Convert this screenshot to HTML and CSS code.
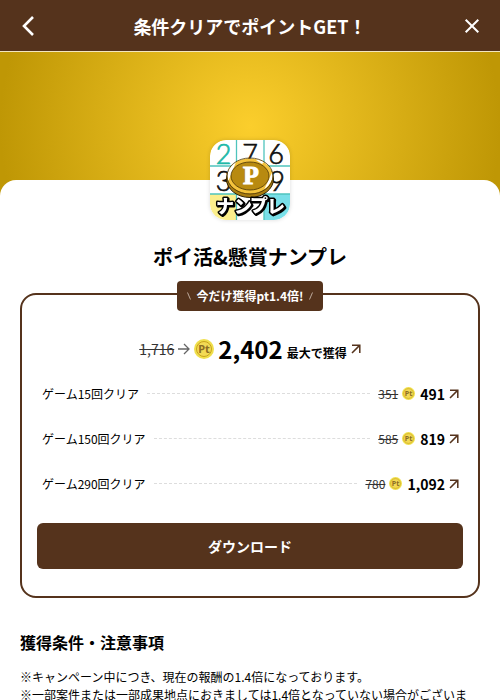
FILE: index.html
```html
<!DOCTYPE html>
<html lang="ja">
<head>
<meta charset="utf-8">
<meta name="viewport" content="width=device-width, initial-scale=1">
<title>条件クリアでポイントGET！</title>
<link rel="stylesheet" href="styles.css">
</head>
<body>
<svg width="0" height="0" class="defs" aria-hidden="true">
  <symbol id="up" viewBox="0 0 10 10">
    <path d="M1 1.2H8.8V9M8.6 1.4L1 9" fill="none" stroke="#55331c" stroke-width="1.5"/>
  </symbol>
</svg>
<header class="bar">
  <button class="bar-btn" aria-label="戻る"><svg width="16" height="24" viewBox="0 0 16 24"><path d="M13 3L4 12L13 21" fill="none" stroke="#fff" stroke-width="2.6"/></svg></button>
  <h1>条件クリアでポイントGET！</h1>
  <button class="bar-btn" aria-label="閉じる"><svg width="16" height="16" viewBox="0 0 16 16"><path d="M1.7 1.7L14.3 14.3M14.3 1.7L1.7 14.3" fill="none" stroke="#fff" stroke-width="2"/></svg></button>
</header>
<div class="hero"></div>
<main class="sheet">
  <svg class="app-icon" viewBox="0 0 80 80" role="img" aria-label="ナンプレ">
    <defs>
      <clipPath id="tile"><rect width="80" height="80" rx="16"/></clipPath>
      <clipPath id="ring"><ellipse cx="40" cy="36" rx="22.500" ry="17.500"/></clipPath>
    </defs>
    <g clip-path="url(#tile)">
      <rect width="80" height="80" fill="#fff"/>
      <rect y="54" width="26" height="26" fill="#fbee8c"/>
      <rect x="54" y="54" width="26" height="26" fill="#78dfe8"/>
      <path d="M26.500 0V80M54 0V80M0 26H80M0 54H80" stroke="#4fc4bd" stroke-width="1.300"/>
      <g class="digits">
        <text x="13.500" y="24" class="teal">2</text>
        <text x="40" y="24">7</text>
        <text x="66" y="24">6</text>
        <text x="13.500" y="51">3</text>
        <text x="67" y="51">9</text>
      </g>
      <ellipse cx="40" cy="39" rx="23.500" ry="18.500" fill="#a87c10" stroke="#2b1f05" stroke-width="1"/>
      <g clip-path="url(#ring)">
        <rect x="14" y="14" width="52" height="46" fill="#f4c33c"/>
        <path d="M14 48L24 54L36 60L20 60ZM14 36L22 22L26 22L18 42ZM50 16L56 20L52 24L46 20Z" fill="#fff"/>
        <path d="M58 46L66 34L64 28L54 50Z" fill="#fff"/>
      </g>
      <ellipse cx="40" cy="36" rx="23" ry="18" fill="none" stroke="#4a3508" stroke-width=".8"/>
      <ellipse cx="40" cy="36" rx="19" ry="14" fill="#b88a10" stroke="#4a3508" stroke-width=".8"/>
      <text x="41" y="44" class="coin-p">P</text>
      <g class="kana">
        <text x="15" y="73">ナ</text>
        <text x="33" y="73">ン</text>
        <text x="49" y="72">プ</text>
        <text x="66" y="73">レ</text>
      </g>
    </g>
  </svg>
  <h2 class="app-name">ポイ活&amp;懸賞ナンプレ</h2>
  <section class="card">
    <p class="badge"><svg width="4" height="8" viewBox="0 0 4 8"><path d="M.5 .5L3.500 7.500" stroke="#d8c8bc" stroke-width=".8"/></svg><span>今だけ獲得pt1.4倍!</span><svg width="4" height="8" viewBox="0 0 4 8"><path d="M3.500 .5L.5 7.500" stroke="#d8c8bc" stroke-width=".8"/></svg></p>
    <p class="total">
      <s>1,716</s>
      <svg class="next" width="12" height="12" viewBox="0 0 12 12"><path d="M0 6H11M6 1L11 6L6 11" fill="none" stroke="#666" stroke-width="1.300"/></svg>
      <svg class="coin-lg" viewBox="0 0 20 20"><circle class="rim" cx="10" cy="10" r="10"/><circle class="face" cx="10" cy="10" r="7.500"/><text x="10" y="14">Pt</text></svg>
      <strong>2,402</strong>
      <b>最大で獲得</b>
      <svg class="up"><use href="#up"/></svg>
    </p>
    <ul class="steps">
      <li><span>ゲーム15回クリア</span><i class="dots"></i><s>351</s><svg class="coin-sm" viewBox="0 0 20 20"><circle class="rim" cx="10" cy="10" r="10"/><circle class="face" cx="10" cy="10" r="7.500"/><text x="10" y="14">Pt</text></svg><strong>491</strong><svg class="up"><use href="#up"/></svg></li>
      <li><span>ゲーム150回クリア</span><i class="dots"></i><s>585</s><svg class="coin-sm" viewBox="0 0 20 20"><circle class="rim" cx="10" cy="10" r="10"/><circle class="face" cx="10" cy="10" r="7.500"/><text x="10" y="14">Pt</text></svg><strong>819</strong><svg class="up"><use href="#up"/></svg></li>
      <li><span>ゲーム290回クリア</span><i class="dots"></i><s>780</s><svg class="coin-sm" viewBox="0 0 20 20"><circle class="rim" cx="10" cy="10" r="10"/><circle class="face" cx="10" cy="10" r="7.500"/><text x="10" y="14">Pt</text></svg><strong>1,092</strong><svg class="up"><use href="#up"/></svg></li>
    </ul>
    <button class="download">ダウンロード</button>
  </section>
  <section class="notes">
    <h3>獲得条件・注意事項</h3>
    <p>※キャンペーン中につき、現在の報酬の1.4倍になっております。</p>
    <p>※一部案件または一部成果地点におきましては1.4倍となっていない場合がございま</p>
  </section>
</main>
</body>
</html>
```
FILE: styles.css
```css
* { box-sizing: border-box; margin: 0; padding: 0; }
body {
  font-family: "Noto Sans CJK JP", "Noto Sans", sans-serif;
  font-size: 12px;
  line-height: 18px;
  color: #000;
  background: #fff;
}
button { border: 0; background: none; font: inherit; color: inherit; cursor: pointer; }
svg { flex: none; }
.defs { position: absolute; }
.bar {
  display: flex;
  align-items: center;
  justify-content: space-between;
  height: 52px;
  padding: 0 16px;
  background: #55331c;
  border-bottom: 1px solid #f3e6c0;
  color: #fff;
}
.bar h1 { font-size: 18px; line-height: 26px; font-weight: 700; }
.bar-btn { display: flex; align-items: center; justify-content: center; width: 24px; height: 24px; }
.hero {
  height: 148px;
  background: radial-gradient(circle farthest-side at 50% 50%, #fbce2c, #bf9705);
}
.sheet {
  display: flex;
  flex-direction: column;
  margin-top: -20px;
  padding: 0 20px;
  background: #fff;
  border-radius: 16px 16px 0 0;
}
.app-icon {
  align-self: center;
  width: 80px;
  height: 80px;
  margin-top: -40px;
  border-radius: 16px;
  box-shadow: 0 0 4px rgba(0, 0, 0, .15);
}
.digits { font: 300 27px Lato, sans-serif; text-anchor: middle; fill: #111; stroke: #111; stroke-width: .7px; }
.teal { fill: #20b9a8; stroke: #20b9a8; }
.coin-p {
  font: 700 26px "Liberation Serif", serif;
  text-anchor: middle;
  fill: #fff;
  stroke: #fff;
  stroke-width: 1px;
}
.kana {
  font: 900 18px "Noto Sans CJK JP", sans-serif;
  text-anchor: middle;
  fill: #fff;
  stroke: #000;
  stroke-width: 3px;
  stroke-linejoin: round;
  paint-order: stroke;
  filter: drop-shadow(1px 1px 0 #000);
}
.rim { fill: #f0df4c; }
.face { fill: #f3da55; stroke: #c9a41c; stroke-width: 1px; }
.coin-lg text, .coin-sm text {
  font: 700 11px "Noto Sans", sans-serif;
  text-anchor: middle;
  fill: #8c6d24;
}
.app-name { margin-top: 22px; font-size: 20px; line-height: 30px; text-align: center; }
.card {
  display: flex;
  flex-direction: column;
  margin-top: 21px;
  padding: 0 15px 27px;
  border: 2px solid #55331c;
  border-radius: 16px;
}
.badge {
  display: flex;
  align-items: center;
  align-self: center;
  gap: 6px;
  height: 30px;
  margin-top: -14px;
  padding: 0 10px;
  border-radius: 4px;
  background: #55331c;
  color: #fff;
  font-weight: 700;
}
.total {
  display: flex;
  align-items: center;
  justify-content: center;
  gap: 4px;
  height: 36px;
  margin-top: 20px;
}
s { color: #333; }
.total s { font-size: 14px; }
.total strong { font-size: 24px; line-height: 36px; }
.total b { margin-top: 8px; }
.coin-lg { width: 20px; height: 20px; }
.coin-sm { width: 13px; height: 13px; margin: 0 5px 0 4px; }
.up { width: 10px; height: 10px; }
.steps { list-style: none; margin-top: 4px; padding: 0 4px 0 5px; }
.steps li { display: flex; align-items: center; height: 45px; }
.steps strong { font-size: 14px; margin-right: 4px; }
.dots { flex: 1; margin: 0 8px; border-top: 1px dashed #ddd; }
.download {
  height: 46px;
  margin-top: 17px;
  border-radius: 6px;
  background: #55331c;
  color: #fff;
  font-size: 14px;
  font-weight: 700;
}
.notes { margin-top: 32px; }
.notes h3 { margin-bottom: 14px; font-size: 16px; line-height: 24px; }
```
